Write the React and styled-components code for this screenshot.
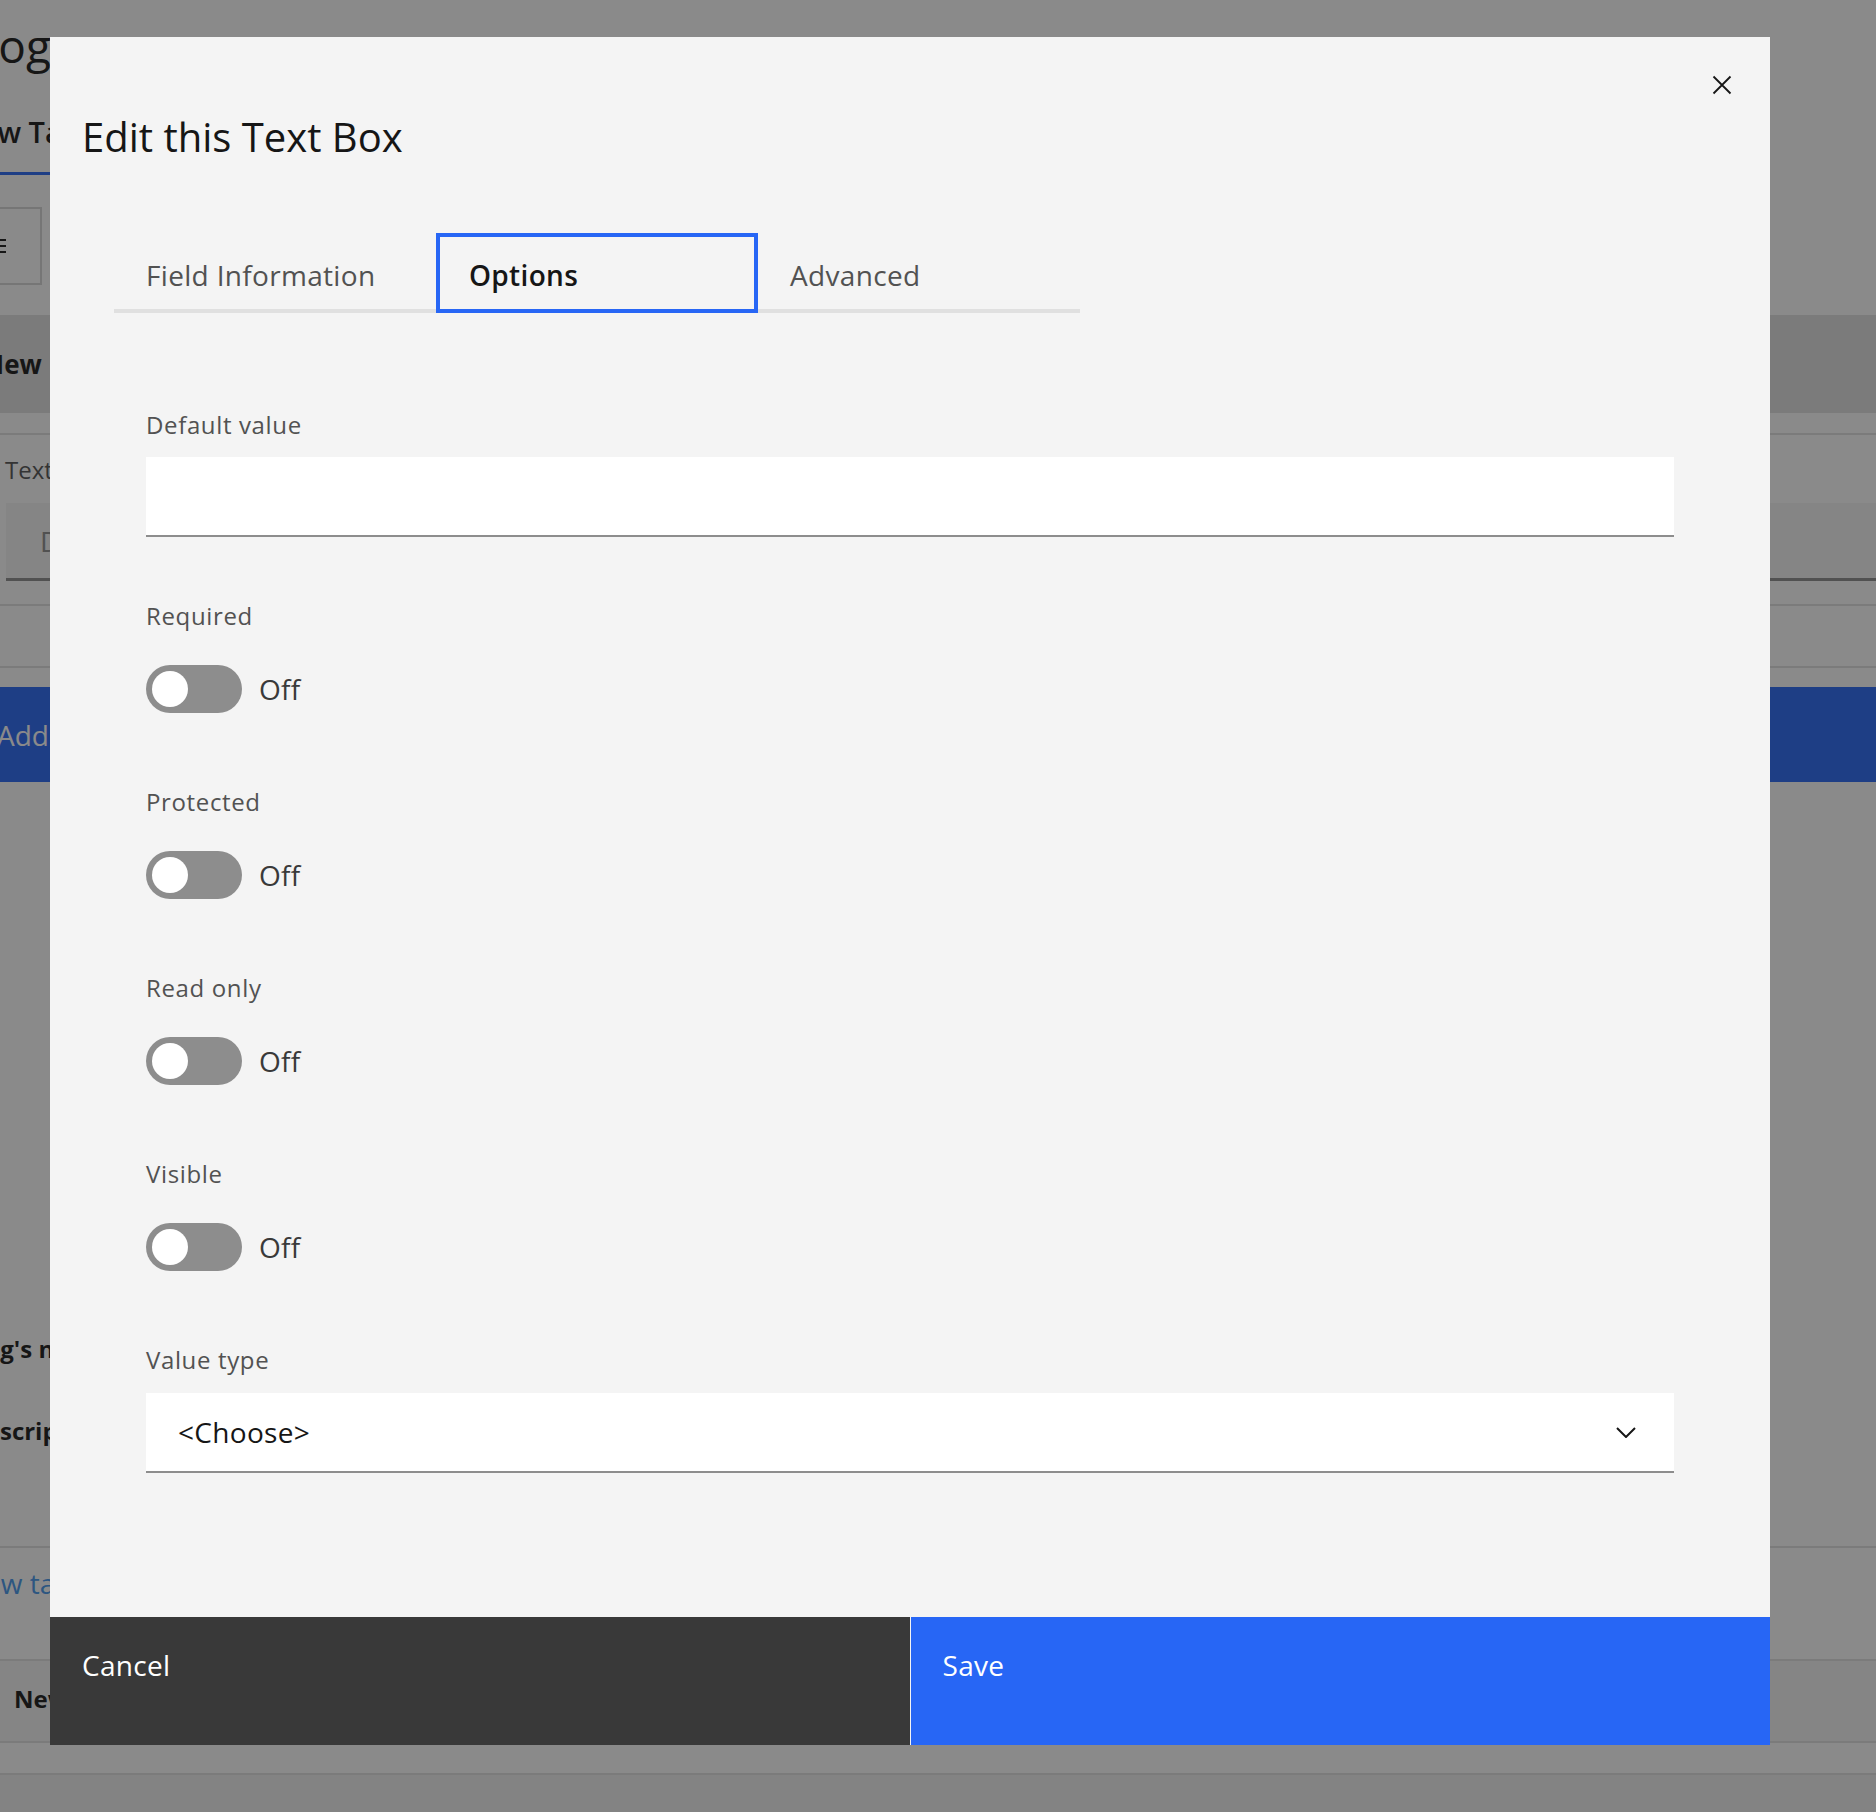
import React from 'react';
import styled, { createGlobalStyle } from 'styled-components';

const GlobalStyle = createGlobalStyle`
  html, body {
    margin: 0;
    padding: 0;
  }
  body {
    font-family: "Open Sans", "Liberation Sans", sans-serif;
    background: #ffffff;
    color: #161616;
    overflow: hidden;
  }
  * {
    box-sizing: border-box;
  }
`;

/* page behind the modal */

const Page = styled.div`
  height: 1812px;
  display: flex;
  flex-direction: column;
  background: #ffffff;
  overflow: hidden;
`;

const BgRow = styled.div`
  flex-shrink: 0;
  height: ${(p) => p.$h}px;
  margin-top: ${(p) => p.$mt || 0}px;
  padding-top: ${(p) => p.$pt || 0}px;
  background: ${(p) => p.$bg || 'transparent'};
  border-bottom: ${(p) => (p.$line ? '2px solid #e0e0e0' : 'none')};
  white-space: nowrap;
  overflow: hidden;
`;

const BgFill = styled.div`
  flex: 1;
  background: #f0f0f0;
`;

const BgText = styled.div`
  margin-left: ${(p) => p.$indent || 0}px;
  font-size: ${(p) => p.$size || 24}px;
  line-height: ${(p) => p.$lh || 30}px;
  font-weight: ${(p) => (p.$bold ? 700 : 400)};
  color: ${(p) => p.$color || '#161616'};
`;

const BgTab = styled.div`
  display: inline-block;
  margin-left: -42px;
  padding: 24px 24px 22px 0;
  font-size: 29px;
  line-height: 36px;
  font-weight: 600;
  color: #161616;
  border-bottom: 3px solid #2766f5;
`;

const BgBox = styled.div`
  width: 102px;
  height: 78px;
  margin-left: -60px;
  padding-left: 44px;
  border: 2px solid #d6d6d6;
  display: flex;
  align-items: center;
`;

const BgInput = styled.div`
  height: 78px;
  margin: 18px 0 0 6px;
  padding-left: 34px;
  background: #f4f4f4;
  border-bottom: 3px solid #8d8d8d;
  display: flex;
  align-items: center;
  font-size: 28px;
  color: #8d8d8d;
`;

/* modal */

const Overlay = styled.div`
  position: fixed;
  inset: 0;
  background: rgba(22, 22, 22, 0.5);
  padding: 37px 0 0 50px;
`;

const Dialog = styled.div`
  position: relative;
  width: 1720px;
  background: #f4f4f4;
  display: flex;
  flex-direction: column;
`;

const Header = styled.div`
  padding: 75px 32px 0;
`;

const Title = styled.h2`
  margin: 0;
  font-size: 40px;
  line-height: 50px;
  font-weight: 400;
  color: #161616;
`;

const CloseButton = styled.button`
  position: absolute;
  top: 38px;
  right: 38px;
  width: 20px;
  height: 20px;
  padding: 0;
  border: 0;
  background: none;
  display: flex;
  cursor: pointer;
`;

const Tabs = styled.div`
  display: flex;
  margin: 71px 0 0 64px;
`;

const Tab = styled.div`
  width: 322px;
  height: 80px;
  padding: ${(p) => (p.$active ? '20px 0 0 29px' : '24px 0 0 32px')};
  border: ${(p) => (p.$active ? '4px solid #2766f5' : '0')};
  border-bottom: 4px solid ${(p) => (p.$active ? '#2766f5' : '#e0e0e0')};
  font-size: 28px;
  line-height: 36px;
  letter-spacing: 0.32px;
  font-weight: ${(p) => (p.$active ? 600 : 400)};
  color: ${(p) => (p.$active ? '#161616' : '#525252')};
  cursor: pointer;
`;

const Form = styled.div`
  display: flex;
  flex-direction: column;
  gap: 63px;
  padding: 96px 96px 144px;
`;

const Field = styled.div`
  display: flex;
  flex-direction: column;
`;

const Label = styled.label`
  font-size: 24px;
  line-height: 32px;
  letter-spacing: 0.64px;
  color: #525252;
  margin-bottom: ${(p) => p.$space || 16}px;
`;

const TextInput = styled.input`
  width: 100%;
  height: 80px;
  padding: 0 32px;
  border: 0;
  border-bottom: 2px solid #8d8d8d;
  background: #ffffff;
  font-family: inherit;
  font-size: 28px;
  letter-spacing: 0.32px;
  color: #161616;
  outline: none;
`;

const ToggleRow = styled.div`
  display: flex;
  align-items: center;
  gap: 17px;
  margin: 17px 0 10px;
`;

const Track = styled.span`
  width: 96px;
  height: 48px;
  padding: 6px;
  border-radius: 24px;
  background: #8d8d8d;
  display: flex;
`;

const Knob = styled.span`
  width: 36px;
  height: 36px;
  border-radius: 50%;
  background: #ffffff;
`;

const ToggleText = styled.span`
  font-size: 28px;
  line-height: 36px;
  letter-spacing: 0.32px;
  color: #393939;
`;

const Select = styled.div`
  height: 80px;
  padding: 0 38px 0 32px;
  background: #ffffff;
  border-bottom: 2px solid #8d8d8d;
  display: flex;
  align-items: center;
  justify-content: space-between;
  font-size: 28px;
  line-height: 36px;
  letter-spacing: 0.32px;
  color: #161616;
  cursor: pointer;
`;

const Footer = styled.div`
  display: grid;
  grid-template-columns: 1fr 1fr;
  gap: 1px;
  height: 128px;
`;

const FooterButton = styled.button`
  border: 0;
  padding: 30px 32px;
  display: flex;
  align-items: flex-start;
  text-align: left;
  background: ${(p) => (p.$primary ? '#2766f5' : '#393939')};
  color: #ffffff;
  font-family: inherit;
  font-size: 28px;
  line-height: 36px;
  letter-spacing: 0.32px;
  cursor: pointer;
`;

const CloseIcon = () => (
  <svg width="20" height="20" viewBox="0 0 20 20" fill="none">
    <path d="M1.5 1.5L18.5 18.5M18.5 1.5L1.5 18.5" stroke="#161616" strokeWidth="1.8" />
  </svg>
);

const ChevronIcon = () => (
  <svg width="20" height="11" viewBox="0 0 20 11" fill="none">
    <path d="M1 1L10 10L19 1" stroke="#161616" strokeWidth="2" />
  </svg>
);

const ListGlyph = () => (
  <svg width="20" height="14" viewBox="0 0 20 14" fill="none">
    <path d="M0 1H20M0 7H20M0 13H20" stroke="#161616" strokeWidth="2" />
  </svg>
);

const Toggle = ({ label }) => (
  <Field>
    <Label>{label}</Label>
    <ToggleRow>
      <Track>
        <Knob />
      </Track>
      <ToggleText>Off</ToggleText>
    </ToggleRow>
  </Field>
);

const BackgroundPage = () => (
  <Page>
    <BgRow $h={90} $pt={15}>
      <BgText $size={46} $lh={60} $indent={-43}>Blog</BgText>
    </BgRow>
    <BgRow $h={85}>
      <BgTab>New Tab</BgTab>
    </BgRow>
    <BgRow $h={140} $pt={32}>
      <BgBox>
        <ListGlyph />
      </BgBox>
    </BgRow>
    <BgRow $h={98} $pt={32} $bg="#e0e0e0">
      <BgText $bold $size={26} $lh={34} $indent={-17}>New</BgText>
    </BgRow>
    <BgRow $h={22} $line />
    <BgRow $h={171} $pt={20} $line>
      <BgText $indent={5} $color="#525252">Text field</BgText>
      <BgInput>Default</BgInput>
    </BgRow>
    <BgRow $h={62} $line />
    <BgRow $h={95} $mt={19} $pt={30} $bg="#2766f5">
      <BgText $size={28} $lh={36} $indent={-3} $color="#ffffff">Add field</BgText>
    </BgRow>
    <BgRow $h={30} $mt={552}>
      <BgText $bold $indent={-38}>Blog's name</BgText>
    </BgRow>
    <BgRow $h={30} $mt={52}>
      <BgText $bold $indent={-32}>Description</BgText>
    </BgRow>
    <BgRow $h={102} $line />
    <BgRow $h={113} $pt={17} $line>
      <BgText $size={28} $lh={36} $indent={-36} $color="#4497ec">New tab</BgText>
    </BgRow>
    <BgRow $h={82} $pt={23} $bg="#f4f4f4" $line>
      <BgText $bold $indent={14}>New</BgText>
    </BgRow>
    <BgRow $h={32} $line />
    <BgFill />
  </Page>
);

const App = () => {
  return (
    <>
      <GlobalStyle />
      <BackgroundPage />
      <Overlay>
        <Dialog>
          <CloseButton aria-label="Close">
            <CloseIcon />
          </CloseButton>
          <Header>
            <Title>Edit this Text Box</Title>
          </Header>
          <Tabs>
            <Tab>Field Information</Tab>
            <Tab $active>Options</Tab>
            <Tab>Advanced</Tab>
          </Tabs>
          <Form>
            <Field>
              <Label>Default value</Label>
              <TextInput type="text" />
            </Field>
            <Toggle label="Required" />
            <Toggle label="Protected" />
            <Toggle label="Read only" />
            <Toggle label="Visible" />
            <Field>
              <Label $space={17}>Value type</Label>
              <Select>
                <span>&lt;Choose&gt;</span>
                <ChevronIcon />
              </Select>
            </Field>
          </Form>
          <Footer>
            <FooterButton>Cancel</FooterButton>
            <FooterButton $primary>Save</FooterButton>
          </Footer>
        </Dialog>
      </Overlay>
    </>
  );
};

export default App;
